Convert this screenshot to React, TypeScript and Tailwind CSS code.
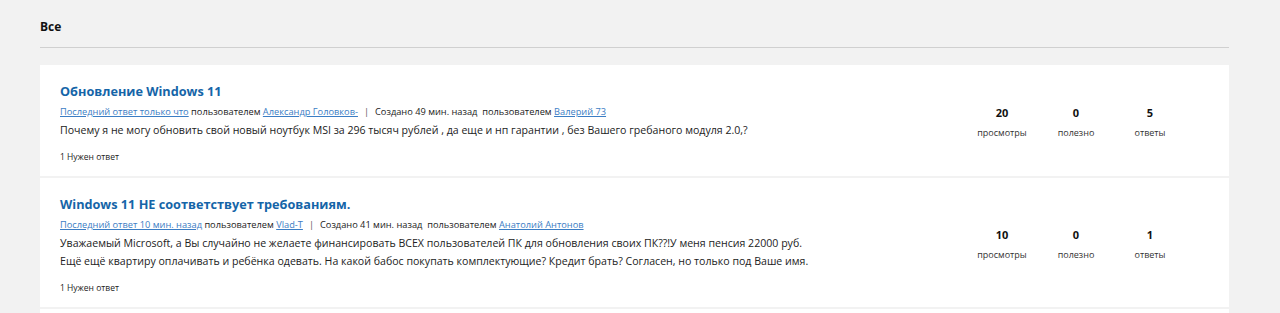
const topics = [
  {
    title: "Обновление Windows 11",
    lastReply: "Последний ответ только что",
    lastUser: "Александр Головков-",
    created: "Создано 49 мин. назад",
    author: "Валерий 73",
    body: [
      "Почему я не могу обновить свой новый ноутбук MSI за 296 тысяч рублей , да еще и нп гарантии , без Вашего гребаного модуля 2.0,?",
    ],
    views: 20,
    helpful: 0,
    replies: 5,
  },
  {
    title: "Windows 11 НЕ соответствует требованиям.",
    lastReply: "Последний ответ 10 мин. назад",
    lastUser: "Vlad-T",
    created: "Создано 41 мин. назад",
    author: "Анатолий Антонов",
    body: [
      "Уважаемый Microsoft, а Вы случайно не желаете финансировать ВСЕХ пользователей ПК для обновления своих ПК??!У меня пенсия 22000 руб.",
      "Ещё ещё квартиру оплачивать и ребёнка одевать. На какой бабос покупать комплектующие? Кредит брать? Согласен, но только под Ваше имя.",
    ],
    views: 10,
    helpful: 0,
    replies: 1,
  },
];

function Stat({ value, label }: { value: number; label: string }) {
  return (
    <div className="w-[74px] flex flex-col items-center">
      <span className="text-[11px] leading-[16px] font-bold text-[#111]">{value}</span>
      <span className="text-[9px] leading-[14px] mt-[5px] text-[#333]">{label}</span>
    </div>
  );
}

export default function App() {
  return (
    <div
      className="min-h-[313px] bg-[#f2f2f2] px-[40px] pt-[17px]"
      style={{ fontFamily: '"Open Sans", "Noto Sans", sans-serif' }}
    >
      <div className="w-[1189px]">
        <h2 className="text-[12px] leading-[20px] font-bold text-[#111] pb-[10px]">Все</h2>
        <div className="border-t border-[#d0d0d0] h-[1px] bg-[#e4e4e4]" />

        <div className="mt-[17px] flex flex-col gap-[2px]">
          {topics.map((t) => (
            <div key={t.title} className="bg-white flex items-center px-5 pt-[16px] pb-[12px]">
              <div className="flex-1">
                <a className="block text-[12.7px] leading-[21px] font-bold text-[#1565a8]">{t.title}</a>
                <div className="text-[9.25px] leading-[19px] text-[#222] whitespace-nowrap">
                  <a className="underline text-[#3b7dc4]">{t.lastReply}</a>
                  <span> пользователем </span>
                  <a className="underline text-[#3b7dc4]">{t.lastUser}</a>
                  <span className="mx-[6px] text-[#555]">|</span>
                  <span>{t.created}&nbsp; пользователем </span>
                  <a className="underline text-[#3b7dc4]">{t.author}</a>
                </div>
                <div className="text-[10.6px] leading-[18px] text-[#222]">
                  {t.body.map((line) => (
                    <p key={line}>{line}</p>
                  ))}
                </div>
                <div className="mt-[11px] text-[8.5px] leading-[14px] text-[#222]">1 Нужен ответ</div>
              </div>
              <div className="flex mr-[22px]">
                <Stat value={t.views} label="просмотры" />
                <Stat value={t.helpful} label="полезно" />
                <Stat value={t.replies} label="ответы" />
              </div>
            </div>
          ))}
          <div className="bg-white h-[10px]" />
        </div>
      </div>
    </div>
  );
}
